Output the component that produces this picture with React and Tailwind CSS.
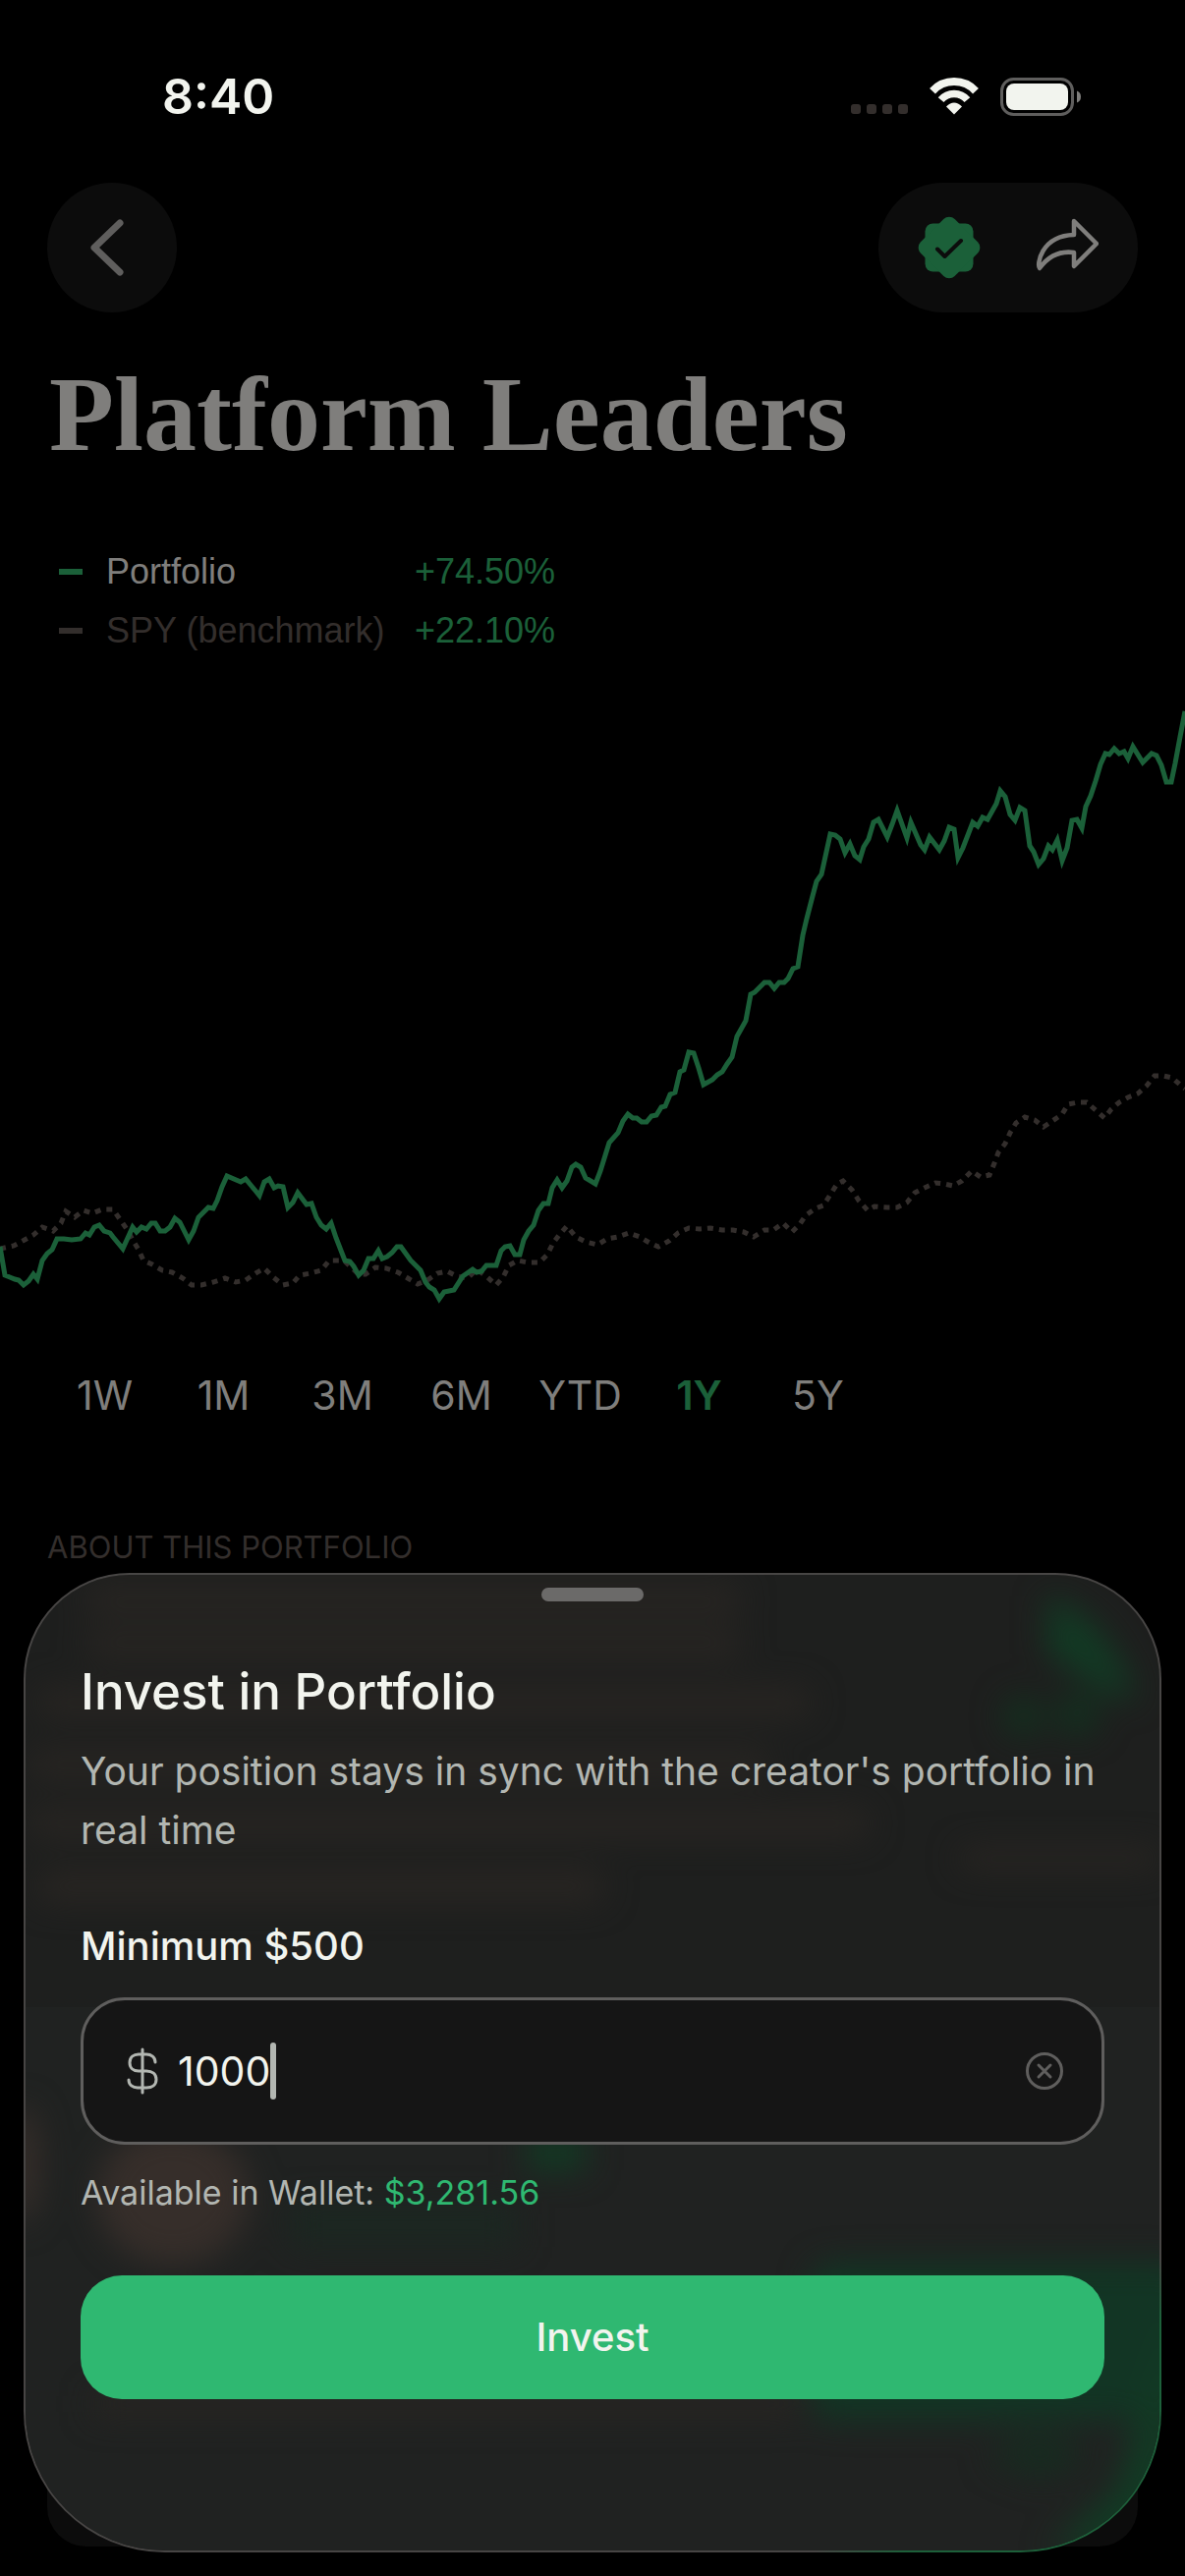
// App.jsx

import { useState } from "react";

const periods = ["1W", "1M", "3M", "6M", "YTD", "1Y", "5Y"];

const legend = [
  { label: "Portfolio", value: "+74.50%", bar: "bg-[#1b6039]", text: "text-[#7f7e7c]" },
  { label: "SPY (benchmark)", value: "+22.10%", bar: "bg-[#332e2c]", text: "text-[#332e2c]" },
];

const portfolioPoints =
  "0,569 5,598 10,600 15,602 19,603 24,608 29,604 34,597 38,602 43,583 48,576 53,572 58,561 65,561 73,562 82,561 87,555 91,557 96,549 101,547 106,553 112,555 115,559 125,571 135,549 139,554 144,549 149,551 154,545 158,545 163,553 168,553 173,549 178,540 183,544 192,562 197,553 202,539 212,529 217,530 221,522 226,508 231,497 245,503 250,500 260,512 264,517 269,503 274,500 279,509 283,507 288,508 293,529 298,524 303,514 312,526 317,525 322,539 327,547 332,551 337,545 342,560 351,583 356,584 360,589 365,598 370,593 375,581 380,581 385,573 389,581 394,579 399,575 404,569 408,569 418,583 428,593 433,605 437,610 442,613 447,622 452,615 462,613 471,599 481,592 485,595 490,594 495,588 505,588 510,573 514,569 519,568 524,577 529,577 533,562 538,553 543,547 548,532 553,525 558,525 562,509 567,501 572,509 577,502 582,488 586,485 591,488 596,499 606,505 611,492 620,463 629,453 634,441 639,434 644,438 648,438 653,442 658,442 663,436 668,435 673,427 677,426 682,414 687,412 692,391 696,389 701,371 706,372 711,387 716,404 725,399 730,394 735,391 740,383 745,376 750,355 759,339 764,312 768,310 774,304 778,300 783,300 788,306 793,300 798,300 802,296 807,286 812,284 817,252 821,235 827,212 831,197 836,190 845,149 850,150 855,154 860,168 865,159 870,171 875,175 879,162 884,154 889,137 894,134 903,152 908,139 913,125 923,153 927,137 937,160 941,165 946,152 956,165 961,156 966,142 971,144 975,173 980,163 990,137 995,141 1000,132 1005,134 1009,127 1014,118 1018,105 1023,111 1028,129 1033,135 1038,122 1043,125 1048,161 1052,167 1057,180 1062,174 1067,161 1071,165 1076,155 1081,176 1086,163 1091,135 1096,134 1101,143 1105,121 1110,110 1115,95 1120,78 1125,67 1129,68 1134,62 1139,67 1144,65 1148,72 1153,60 1163,76 1172,67 1177,69 1182,79 1187,96 1192,96 1196,77 1201,50 1206,24";

const benchmarkPoints =
  "0,571 14,568 25,562 34,557 43,549 54,553 62,545 67,533 76,539 85,532 94,535 104,531 115,531 122,541 129,551 135,562 141,572 146,583 155,587 165,593 175,595 186,601 195,608 205,608 217,605 229,601 240,605 250,603 260,596 269,591 278,600 288,608 298,606 305,598 316,596 327,593 335,583 345,583 351,584 365,597 372,597 382,590 393,591 405,595 415,601 425,607 435,603 445,596 455,594 465,599 476,601 485,592 495,599 505,608 512,600 518,588 527,583 537,585 549,585 557,577 563,565 569,557 577,548 586,559 596,564 608,567 618,561 629,559 640,555 651,559 661,565 670,569 681,563 690,555 701,550 712,551 723,550 735,552 746,552 757,554 767,559 778,552 787,552 797,545 806,554 814,546 820,537 830,530 838,527 845,516 852,505 858,502 867,511 874,522 883,532 890,528 903,529 913,529 923,524 931,514 941,509 952,504 961,505 970,507 979,502 989,492 998,498 1007,496 1012,484 1016,473 1023,464 1028,453 1034,443 1043,437 1053,440 1062,447 1071,441 1081,434 1087,424 1097,422 1106,422 1115,430 1124,438 1131,429 1139,422 1148,417 1158,413 1167,405 1175,395 1184,395 1193,397 1202,405 1206,408";

function StatusBar() {
  return (
    <div className="flex h-[60px] items-center justify-between pl-[165px] pr-[105px] text-[#f2f4ee]">
      <span className="text-[50px] leading-[60px] font-semibold">8:40</span>
      <div className="flex items-center gap-[22px]">
        <div className="flex gap-[6px] self-end pb-[2px]">
          <span className="size-[10px] rounded-[3px] bg-[#332e2c]" />
          <span className="size-[10px] rounded-[3px] bg-[#332e2c]" />
          <span className="size-[10px] rounded-[3px] bg-[#332e2c]" />
          <span className="size-[10px] rounded-[3px] bg-[#332e2c]" />
        </div>
        <svg width="50" height="38" viewBox="0 0 50 38" fill="none" stroke="currentColor">
          <path d="M3 13.7A30 30 0 0 1 47 13.7" strokeWidth="8" />
          <path d="M11.6 22.7A17.5 17.5 0 0 1 38.4 22.7" strokeWidth="7.5" />
          <path d="M17 29.5Q25 21.500 33 29.500L25 37.500Z" fill="currentColor" stroke="none" />
        </svg>
        <svg width="83" height="39" viewBox="0 0 83 39">
          <rect x="1.500" y="1.500" width="72" height="36" rx="12" fill="none" stroke="#5f5e5d" strokeWidth="3" />
          <rect x="6" y="6" width="63" height="27" rx="8" fill="currentColor" />
          <path d="M78 13.500Q82 15 82 19.500T78 25.500Z" fill="#7f7e7c" />
        </svg>
      </div>
    </div>
  );
}

function Header() {
  return (
    <header className="mt-[58px] flex justify-between px-12">
      <button type="button" aria-label="Back" className="flex size-[132px] items-center justify-center rounded-full bg-[#0c0c0c] pr-[10px]">
        <svg width="34" height="58" viewBox="0 0 34 58" fill="none" stroke="#5f5e5d" strokeWidth="7" strokeLinecap="round" strokeLinejoin="round">
          <path d="M30 4L4 29L30 54" />
        </svg>
      </button>
      <div className="flex h-[132px] items-center gap-14 rounded-full bg-[#0c0c0c] px-10">
        <button type="button" aria-label="Verified">
          <svg width="64" height="64" viewBox="-32 -32 64 64">
            <g fill="#1b6039">
              <rect x="-24.500" y="-24.500" width="49" height="49" rx="8" />
              <rect x="-24.500" y="-24.500" width="49" height="49" rx="8" transform="rotate(45)" />
            </g>
            <path d="M-12 1.500L-4.500 9L12 -7" fill="none" stroke="#0c0c0c" strokeWidth="4" strokeLinecap="round" strokeLinejoin="round" />
          </svg>
        </button>
        <button type="button" aria-label="Share">
          <svg width="64" height="64" viewBox="0 0 64 64" fill="none" stroke="#7f7e7c" strokeWidth="4.500" strokeLinecap="round" strokeLinejoin="round">
            <path d="M39 5L62 28L39 51V37C24 35 12 42 4 53C1 50 5 20 39 19Z" />
          </svg>
        </button>
      </div>
    </header>
  );
}

function Chart() {
  return (
    <svg className="mt-7 h-[640px] w-full" viewBox="0 0 1206 640" preserveAspectRatio="none" fill="none" role="img" aria-label="Portfolio performance against SPY">
      <polyline points={benchmarkPoints} stroke="#332e2c" strokeWidth="5" strokeDasharray="6 6" />
      <polyline points={portfolioPoints} stroke="#1b6039" strokeWidth="5" />
    </svg>
  );
}

// Soft colour coming through the frosted sheet
function Backdrop() {
  return (
    <svg className="absolute inset-0 size-full" viewBox="0 0 1154 993" preserveAspectRatio="none" aria-hidden="true">
      <defs>
        <filter id="soft" x="-20%" y="-20%" width="140%" height="140%" colorInterpolationFilters="sRGB">
          <feGaussianBlur stdDeviation="16" />
        </filter>
      </defs>
      <rect y="440" width="1154" height="553" fill="#202221" />
      <g filter="url(#soft)">
        <g fill="#282522">
          <rect x="60" y="10" width="670" height="30" rx="15" />
          <rect x="60" y="56" width="670" height="30" rx="15" />
          <rect x="10" y="115" width="790" height="30" rx="15" />
          <rect x="0" y="178" width="760" height="30" rx="15" />
          <rect x="0" y="238" width="860" height="30" rx="15" />
          <rect x="10" y="300" width="580" height="34" rx="17" />
          <rect x="950" y="278" width="204" height="22" rx="11" />
          <rect x="70" y="832" width="720" height="24" />
        </g>
        <ellipse cx="150" cy="632" rx="78" ry="70" fill="#362e2a" />
        <ellipse cx="-4" cy="600" rx="18" ry="60" fill="#362e2a" />
        <path d="M1040 20Q1110 50 1130 130L1100 120L1040 80Z" fill="#123a24" />
        <circle cx="1015" cy="144" r="20" fill="#13301f" />
        <circle cx="1070" cy="142" r="22" fill="#13301f" />
        <rect x="510" y="570" width="60" height="36" fill="#123a24" />
        <rect x="270" y="640" width="230" height="44" fill="#1b2721" />
        <rect x="800" y="700" width="390" height="160" rx="20" fill="#123524" />
        <path d="M1170 740V993H1040L1110 930L1136 840Z" fill="#123a24" />
        <path d="M980 900Q1010 860 1060 880T1030 920Z" fill="#172b20" />
      </g>
    </svg>
  );
}

function InvestSheet() {
  const [amount, setAmount] = useState("1000");

  return (
    <section
      role="dialog"
      aria-labelledby="sheet-title"
      className="absolute inset-x-6 bottom-6 rounded-t-[108px] rounded-b-[144px] bg-[radial-gradient(360px_250px_at_100%_95%,#1d603a_0%,#1d603a_75%,#474544_100%)] p-[2px]"
    >
      <div className="relative overflow-hidden rounded-t-[106px] rounded-b-[142px] bg-[#1e1f1e]">
        <Backdrop />
        <form className="relative flex flex-col px-14 pt-[13px] pb-[154px]" onSubmit={(e) => e.preventDefault()}>
          <span className="h-[14px] w-[104px] self-center rounded-full bg-[#6b6a69]" />
          <h2 id="sheet-title" className="mt-[62px] text-[51px] leading-[60px] font-medium text-[#f2f4ee]">
            Invest in Portfolio
          </h2>
          <p className="mt-[21px] text-[39px] leading-[60px] text-[#b2b6b1]">
            Your position stays in sync with the creator's portfolio in real time
          </p>
          <label htmlFor="amount" className="mt-[58px] text-[40px] leading-[60px] font-medium text-[#f2f4ee]">
            Minimum $500
          </label>
          <div className="mt-[22px] flex h-[150px] items-center rounded-[45px] border-3 border-[#5f5e5d] bg-[#151515] pr-[38px] pl-[44px]">
            <svg width="32" height="48" viewBox="0 0 32 48" fill="none" stroke="#b2b6b1" strokeWidth="3" strokeLinecap="round">
              <path d="M16 2V46M29 15C29 10 25 7 20 7H12C7 7 3 10 3 15.500S7 24 12 24H20C26 24 30 27 30 32.500S26 41 20 41H11C6 41 2 38 2 33" />
            </svg>
            <input
              id="amount"
              inputMode="numeric"
              className="ml-[20px] field-sizing-content text-[41px] leading-[60px] text-[#f2f4ee] outline-none"
              value={amount}
              onChange={(e) => setAmount(e.target.value)}
            />
            <span className="h-[58px] w-[6px] rounded-full bg-[#b2b6b1]" />
            <button type="button" aria-label="Clear amount" className="ml-auto" onClick={() => setAmount("")}>
              <svg width="40" height="40" viewBox="0 0 40 40" fill="none" stroke="#5f5e5d" strokeWidth="3" strokeLinecap="round">
                <circle cx="20" cy="20" r="17.500" />
                <path d="M14 14L26 26M26 14L14 26" />
              </svg>
            </button>
          </div>
          <p className="mt-6 text-[34px] leading-[50px] text-[#b2b6b1]">
            Available in Wallet: <span className="text-[#2fb871]">$3,281.56</span>
          </p>
          <button type="submit" className="mt-[59px] h-[126px] rounded-[42px] bg-[#2fb871] text-[40px] font-medium text-[#f2f4ee]">
            Invest
          </button>
        </form>
      </div>
    </section>
  );
}

export default function App() {
  return (
    <div className="relative flex min-h-screen flex-col bg-black pt-[68px] font-['Inter',sans-serif]">
      <StatusBar />
      <Header />
      <h1 className="mt-11 px-[50px] font-['Liberation_Serif',serif] text-[108px] leading-[120px] font-bold text-[#7f7e7c]">
        Platform Leaders
      </h1>
      <ul className="mt-[70px] px-[60px] font-['Liberation_Sans',sans-serif] text-[36px] leading-[60px]">
        {legend.map((item) => (
          <li key={item.label} className="flex items-center">
            <span className={`h-[6px] w-6 ${item.bar}`} />
            <span className={`ml-6 w-[314px] ${item.text}`}>{item.label}</span>
            <span className="text-[#1b6039]">{item.value}</span>
          </li>
        ))}
      </ul>
      <Chart />
      <div className="mt-[50px] flex pl-[46px] text-[41px] leading-[60px]">
        {periods.map((period) => (
          <button
            key={period}
            type="button"
            className={period === "1Y" ? "w-[121px] font-semibold text-[#1b6039]" : "w-[121px] text-[#7f7e7c]"}
          >
            {period}
          </button>
        ))}
      </div>
      <h2 className="mt-[95px] px-12 text-[31px] leading-[60px] text-[#332e2c]">ABOUT THIS PORTFOLIO</h2>
      <div className="mx-12 mt-[300px] mb-[30px] flex-1 rounded-[40px] bg-[#0c0c0c]" />
      <InvestSheet />
    </div>
  );
}
